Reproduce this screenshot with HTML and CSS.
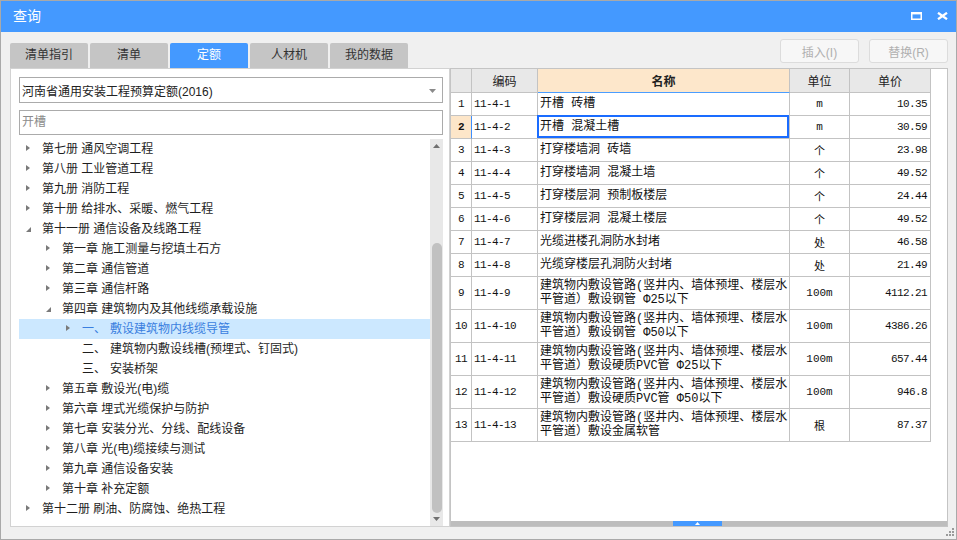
FILE: index.html
```html
<!DOCTYPE html>
<html lang="zh-CN">
<head>
<meta charset="utf-8">
<title>查询</title>
<link rel="stylesheet" href="styles.css">
</head>
<body>
<div class="window">
  <div class="titlebar">
    <span class="title">查询</span>
    <div class="winctl">
      <svg class="ico" width="11" height="8" viewBox="0 0 11 8"><rect x="0.75" y="1" width="9.5" height="6.25" fill="none" stroke="#fff" stroke-width="1.5"/><rect x="0" y="0" width="11" height="2.4" fill="#fff"/></svg>
      <svg class="ico" width="11" height="8" viewBox="0 0 11 8"><path d="M1 0.8 L10 7.2 M10 0.8 L1 7.2" stroke="#fff" stroke-width="2.3" fill="none"/></svg>
    </div>
  </div>
  <div class="content">
    <div class="toprow">
      <div class="tabs">
        <div class="tab">清单指引</div>
        <div class="tab">清单</div>
        <div class="tab tab-active">定额</div>
        <div class="tab">人材机</div>
        <div class="tab">我的数据</div>
      </div>
      <div class="actions">
        <button class="btn" disabled>插入(I)</button>
        <button class="btn" disabled>替换(R)</button>
      </div>
    </div>
    <div class="main">
      <div class="left">
        <div class="select">
          <span>河南省通用安装工程预算定额(2016)</span>
          <svg class="caret" width="7" height="4" viewBox="0 0 7 4"><path d="M0 0 H7 L3.5 4 Z" fill="#8a8a8a"/></svg>
        </div>
        <div class="search">开槽</div>
        <div class="treebox">
          <div class="tree">
            <div class="node l0"><span class="tw tw-c"></span>第七册 通风空调工程</div>
            <div class="node l0"><span class="tw tw-c"></span>第八册 工业管道工程</div>
            <div class="node l0"><span class="tw tw-c"></span>第九册 消防工程</div>
            <div class="node l0"><span class="tw tw-c"></span>第十册 给排水、采暖、燃气工程</div>
            <div class="node l0"><span class="tw tw-e"></span>第十一册 通信设备及线路工程</div>
            <div class="node l1"><span class="tw tw-c"></span>第一章 施工测量与挖填土石方</div>
            <div class="node l1"><span class="tw tw-c"></span>第二章 通信管道</div>
            <div class="node l1"><span class="tw tw-c"></span>第三章 通信杆路</div>
            <div class="node l1"><span class="tw tw-e"></span>第四章 建筑物内及其他线缆承载设施</div>
            <div class="node l2 node-sel"><span class="tw tw-c"></span><span class="num">一、</span>敷设建筑物内线缆导管</div>
            <div class="node l2"><span class="tw"></span><span class="num">二、</span>建筑物内敷设线槽(预埋式、钉固式)</div>
            <div class="node l2"><span class="tw"></span><span class="num">三、</span>安装桥架</div>
            <div class="node l1"><span class="tw tw-c"></span>第五章 敷设光(电)缆</div>
            <div class="node l1"><span class="tw tw-c"></span>第六章 埋式光缆保护与防护</div>
            <div class="node l1"><span class="tw tw-c"></span>第七章 安装分光、分线、配线设备</div>
            <div class="node l1"><span class="tw tw-c"></span>第八章 光(电)缆接续与测试</div>
            <div class="node l1"><span class="tw tw-c"></span>第九章 通信设备安装</div>
            <div class="node l1"><span class="tw tw-c"></span>第十章 补充定额</div>
            <div class="node l0"><span class="tw tw-c"></span>第十二册 刷油、防腐蚀、绝热工程</div>
          </div>
          <div class="vscroll">
            <div class="varrow"><svg width="7" height="4" viewBox="0 0 7 4"><path d="M0 4 H7 L3.5 0 Z" fill="#707070"/></svg></div>
            <div class="vtrack"><div class="vthumb"></div></div>
            <div class="varrow varrow-down"><svg width="7" height="4" viewBox="0 0 7 4"><path d="M0 0 H7 L3.5 4 Z" fill="#707070"/></svg></div>
          </div>
        </div>
      </div>
      <div class="right">
        <div class="grid">
          <div class="row row-head">
            <div class="cell c-no"></div>
            <div class="cell c-center">编码</div>
            <div class="cell c-center c-head-sel">名称</div>
            <div class="cell c-center">单位</div>
            <div class="cell c-center">单价</div>
          </div>
          <div class="row">
            <div class="cell c-no">1</div><div class="cell c-code">11-4-1</div><div class="cell c-name">开槽 砖槽</div><div class="cell c-unit">m</div><div class="cell c-price">10.35</div>
          </div>
          <div class="row">
            <div class="cell c-no c-no-sel">2</div><div class="cell c-code">11-4-2</div><div class="cell c-name c-name-sel">开槽 混凝土槽</div><div class="cell c-unit">m</div><div class="cell c-price">30.59</div>
          </div>
          <div class="row">
            <div class="cell c-no">3</div><div class="cell c-code">11-4-3</div><div class="cell c-name">打穿楼墙洞 砖墙</div><div class="cell c-unit">个</div><div class="cell c-price">23.98</div>
          </div>
          <div class="row">
            <div class="cell c-no">4</div><div class="cell c-code">11-4-4</div><div class="cell c-name">打穿楼墙洞 混凝土墙</div><div class="cell c-unit">个</div><div class="cell c-price">49.52</div>
          </div>
          <div class="row">
            <div class="cell c-no">5</div><div class="cell c-code">11-4-5</div><div class="cell c-name">打穿楼层洞 预制板楼层</div><div class="cell c-unit">个</div><div class="cell c-price">24.44</div>
          </div>
          <div class="row">
            <div class="cell c-no">6</div><div class="cell c-code">11-4-6</div><div class="cell c-name">打穿楼层洞 混凝土楼层</div><div class="cell c-unit">个</div><div class="cell c-price">49.52</div>
          </div>
          <div class="row">
            <div class="cell c-no">7</div><div class="cell c-code">11-4-7</div><div class="cell c-name">光缆进楼孔洞防水封堵</div><div class="cell c-unit">处</div><div class="cell c-price">46.58</div>
          </div>
          <div class="row">
            <div class="cell c-no">8</div><div class="cell c-code">11-4-8</div><div class="cell c-name">光缆穿楼层孔洞防火封堵</div><div class="cell c-unit">处</div><div class="cell c-price">21.49</div>
          </div>
          <div class="row row-tall">
            <div class="cell c-no">9</div><div class="cell c-code">11-4-9</div><div class="cell c-name">建筑物内敷设管路(竖井内、墙体预埋、楼层水平管道）敷设钢管 Φ25以下</div><div class="cell c-unit">100m</div><div class="cell c-price">4112.21</div>
          </div>
          <div class="row row-tall">
            <div class="cell c-no">10</div><div class="cell c-code">11-4-10</div><div class="cell c-name">建筑物内敷设管路(竖井内、墙体预埋、楼层水平管道）敷设钢管 Φ50以下</div><div class="cell c-unit">100m</div><div class="cell c-price">4386.26</div>
          </div>
          <div class="row row-tall">
            <div class="cell c-no">11</div><div class="cell c-code">11-4-11</div><div class="cell c-name">建筑物内敷设管路(竖井内、墙体预埋、楼层水平管道）敷设硬质PVC管 Φ25以下</div><div class="cell c-unit">100m</div><div class="cell c-price">657.44</div>
          </div>
          <div class="row row-tall">
            <div class="cell c-no">12</div><div class="cell c-code">11-4-12</div><div class="cell c-name">建筑物内敷设管路(竖井内、墙体预埋、楼层水平管道）敷设硬质PVC管 Φ50以下</div><div class="cell c-unit">100m</div><div class="cell c-price">946.8</div>
          </div>
          <div class="row row-tall">
            <div class="cell c-no">13</div><div class="cell c-code">11-4-13</div><div class="cell c-name">建筑物内敷设管路(竖井内、墙体预埋、楼层水平管道）敷设金属软管</div><div class="cell c-unit">根</div><div class="cell c-price">87.37</div>
          </div>
        </div>
        <div class="hscroll">
          <div class="hthumb"><svg width="5" height="3" viewBox="0 0 5 3"><path d="M0 3 H5 L2.5 0 Z" fill="#fff"/></svg></div>
        </div>
      </div>
    </div>
  </div>
  <svg class="grip" width="8" height="8" viewBox="0 0 8 8"><g fill="#9a9a9a"><rect x="6" y="0" width="2" height="2"/><rect x="3" y="3" width="2" height="2"/><rect x="6" y="3" width="2" height="2"/><rect x="0" y="6" width="2" height="2"/><rect x="3" y="6" width="2" height="2"/><rect x="6" y="6" width="2" height="2"/></g></svg>
</div>
</body>
</html>
```
FILE: styles.css
```css
html, body {
  margin: 0;
  padding: 0;
  background: #ffffff;
}

body {
  width: 957px;
  height: 540px;
  overflow: hidden;
  font-family: "Liberation Sans", "Noto Sans CJK SC", sans-serif;
  font-size: 12px;
  color: #1e1e1e;
}

.window {
  position: relative;
  box-sizing: border-box;
  width: 957px;
  height: 540px;
  border: 1px solid #a9a9a9;
  background: #f0f0f0;
  display: flex;
  flex-direction: column;
}

.titlebar {
  height: 31px;
  flex: none;
  background: #4499ff;
  color: #ffffff;
  display: flex;
  align-items: center;
  justify-content: space-between;
  padding: 0 8px 0 12px;
}

.title {
  font-size: 14px;
  line-height: 31px;
}

.winctl {
  display: flex;
  align-items: center;
  gap: 15px;
  margin-top: -2px;
}

.ico {
  display: block;
}

.content {
  flex: 1;
  display: flex;
  flex-direction: column;
  padding: 7px 8px 0 9px;
}

.toprow {
  height: 29px;
  display: flex;
  justify-content: space-between;
  align-items: flex-start;
  flex: none;
}

.tabs {
  display: flex;
  gap: 2px;
  margin-top: 4px;
}

.tab {
  width: 78px;
  height: 25px;
  line-height: 25px;
  text-align: center;
  background: #c5c5c5;
  color: #333333;
  border-radius: 2px 2px 0 0;
  font-size: 12px;
}

.tab-active {
  background: #4499ff;
  color: #ffffff;
}

.actions {
  display: flex;
  gap: 10px;
}

.btn {
  width: 79px;
  height: 24px;
  box-sizing: border-box;
  border: 1px solid #dcdcdc;
  border-radius: 3px;
  background: #f7f7f7;
  color: #b0b0b0;
  font-family: "Liberation Sans", "Noto Sans CJK SC", sans-serif;
  font-size: 12px;
  padding: 0;
}

.main {
  height: 459px;
  flex: none;
  display: flex;
}

.left {
  width: 440px;
  box-sizing: border-box;
  border: 1px solid #d2d2d2;
  background: #ffffff;
  padding: 8px 6px 0 8px;
  display: flex;
  flex-direction: column;
}

.select {
  height: 26px;
  box-sizing: border-box;
  border: 1px solid #ababab;
  display: flex;
  align-items: center;
  justify-content: space-between;
  padding: 0 6px 0 2px;
  color: #222222;
  flex: none;
}

.caret {
  display: block;
  margin-top: 1px;
}

.search {
  height: 25px;
  box-sizing: border-box;
  border: 1px solid #ababab;
  margin-top: 7px;
  padding-left: 2px;
  line-height: 23px;
  color: #8c8c8c;
  flex: none;
}

.treebox {
  flex: 1;
  margin-top: 4px;
  display: flex;
  min-height: 0;
}

.tree {
  flex: 1;
}

.node {
  height: 20px;
  box-sizing: border-box;
  padding-top: 1px;
  line-height: 19px;
  display: flex;
  align-items: center;
  white-space: pre;
  color: #1e1e1e;
}

.l0 { padding-left: 0; }
.l1 { padding-left: 20px; }
.l2 { padding-left: 40px; }

.tw {
  width: 23px;
  height: 19px;
  flex: none;
  position: relative;
}

.tw-c::before {
  content: "";
  position: absolute;
  left: 7px;
  top: 5px;
  border-style: solid;
  border-width: 3.5px 0 3.5px 4px;
  border-color: transparent transparent transparent #7a7a7a;
}

.tw-e::before {
  content: "";
  position: absolute;
  left: 7px;
  top: 7px;
  border-style: solid;
  border-width: 0 0 5px 5px;
  border-color: transparent transparent #7a7a7a transparent;
}

.num {
  margin-right: 4px;
}

.node-sel {
  background: #cce8ff;
  color: #3a7fe0;
}

.vscroll {
  width: 13px;
  background: #e8e8e8;
  display: flex;
  flex-direction: column;
}

.varrow {
  height: 13px;
  display: flex;
  align-items: center;
  justify-content: center;
  flex: none;
}

.varrow svg {
  display: block;
}

.varrow-down {
  height: 12px;
  align-items: flex-start;
  padding-top: 3px;
  box-sizing: border-box;
}

.vtrack {
  flex: 1;
  display: flex;
  justify-content: center;
}

.vthumb {
  width: 10px;
  height: 270px;
  margin-top: 91px;
  background: #c1c1c1;
  border-radius: 5px;
}

.right {
  flex: 1;
  box-sizing: border-box;
  border: 1px solid #c4c4c4;
  background: #ffffff;
  display: flex;
  flex-direction: column;
  justify-content: space-between;
}

.grid {
  width: 480px;
}

.row {
  display: grid;
  grid-template-columns: 21px 66px 252px 60px 81px;
  height: 23px;
}

.row-head {
  height: 24px;
  background: #e8e8e8;
}

.row-tall {
  height: 33px;
}

.cell {
  box-sizing: border-box;
  border-right: 1px solid #c3c3c3;
  border-bottom: 1px solid #c3c3c3;
  display: flex;
  align-items: center;
  min-width: 0;
  color: #111111;
}

.row-head .cell {
  color: #222222;
  font-size: 12px;
}

.c-center {
  justify-content: center;
}

.c-head-sel {
  background: #fde7cb;
  font-weight: bold;
  border-bottom-color: #4a9dff;
}

.c-no {
  justify-content: center;
  font-family: "Liberation Mono", monospace;
  font-size: 11px;
  letter-spacing: -0.6px;
}

.c-no-sel {
  background: #fde6c9;
  font-weight: bold;
  border-right-color: #3d8fff;
}

.c-code {
  padding-left: 2px;
  font-family: "Liberation Mono", "Noto Sans CJK SC", monospace;
  font-size: 11px;
  letter-spacing: -0.6px;
}

.c-name {
  padding-left: 2px;
  line-height: 14px;
  font-family: "Liberation Mono", "Noto Sans CJK SC", monospace;
  font-size: 12px;
  word-break: break-all;
}

.c-name-sel {
  position: relative;
}

.c-name-sel::after {
  content: "";
  position: absolute;
  top: -1px;
  left: -1px;
  right: 0;
  bottom: 0;
  border: 2px solid #1a6cff;
}

.c-unit {
  justify-content: center;
  font-family: "Liberation Mono", "Noto Sans CJK SC", monospace;
  font-size: 11px;
}

.c-price {
  justify-content: flex-end;
  padding-right: 3px;
  font-family: "Liberation Mono", monospace;
  font-size: 11px;
  letter-spacing: -0.6px;
}

.hscroll {
  height: 5px;
  background: #bdbdbd;
  flex: none;
  padding-left: 222px;
}

.hthumb {
  width: 49px;
  height: 5px;
  background: #4499ff;
  display: flex;
  align-items: flex-end;
  justify-content: center;
}

.hthumb svg {
  display: block;
  margin-bottom: 1px;
}

.grip {
  position: absolute;
  right: 2px;
  bottom: 3px;
  display: block;
}
```
